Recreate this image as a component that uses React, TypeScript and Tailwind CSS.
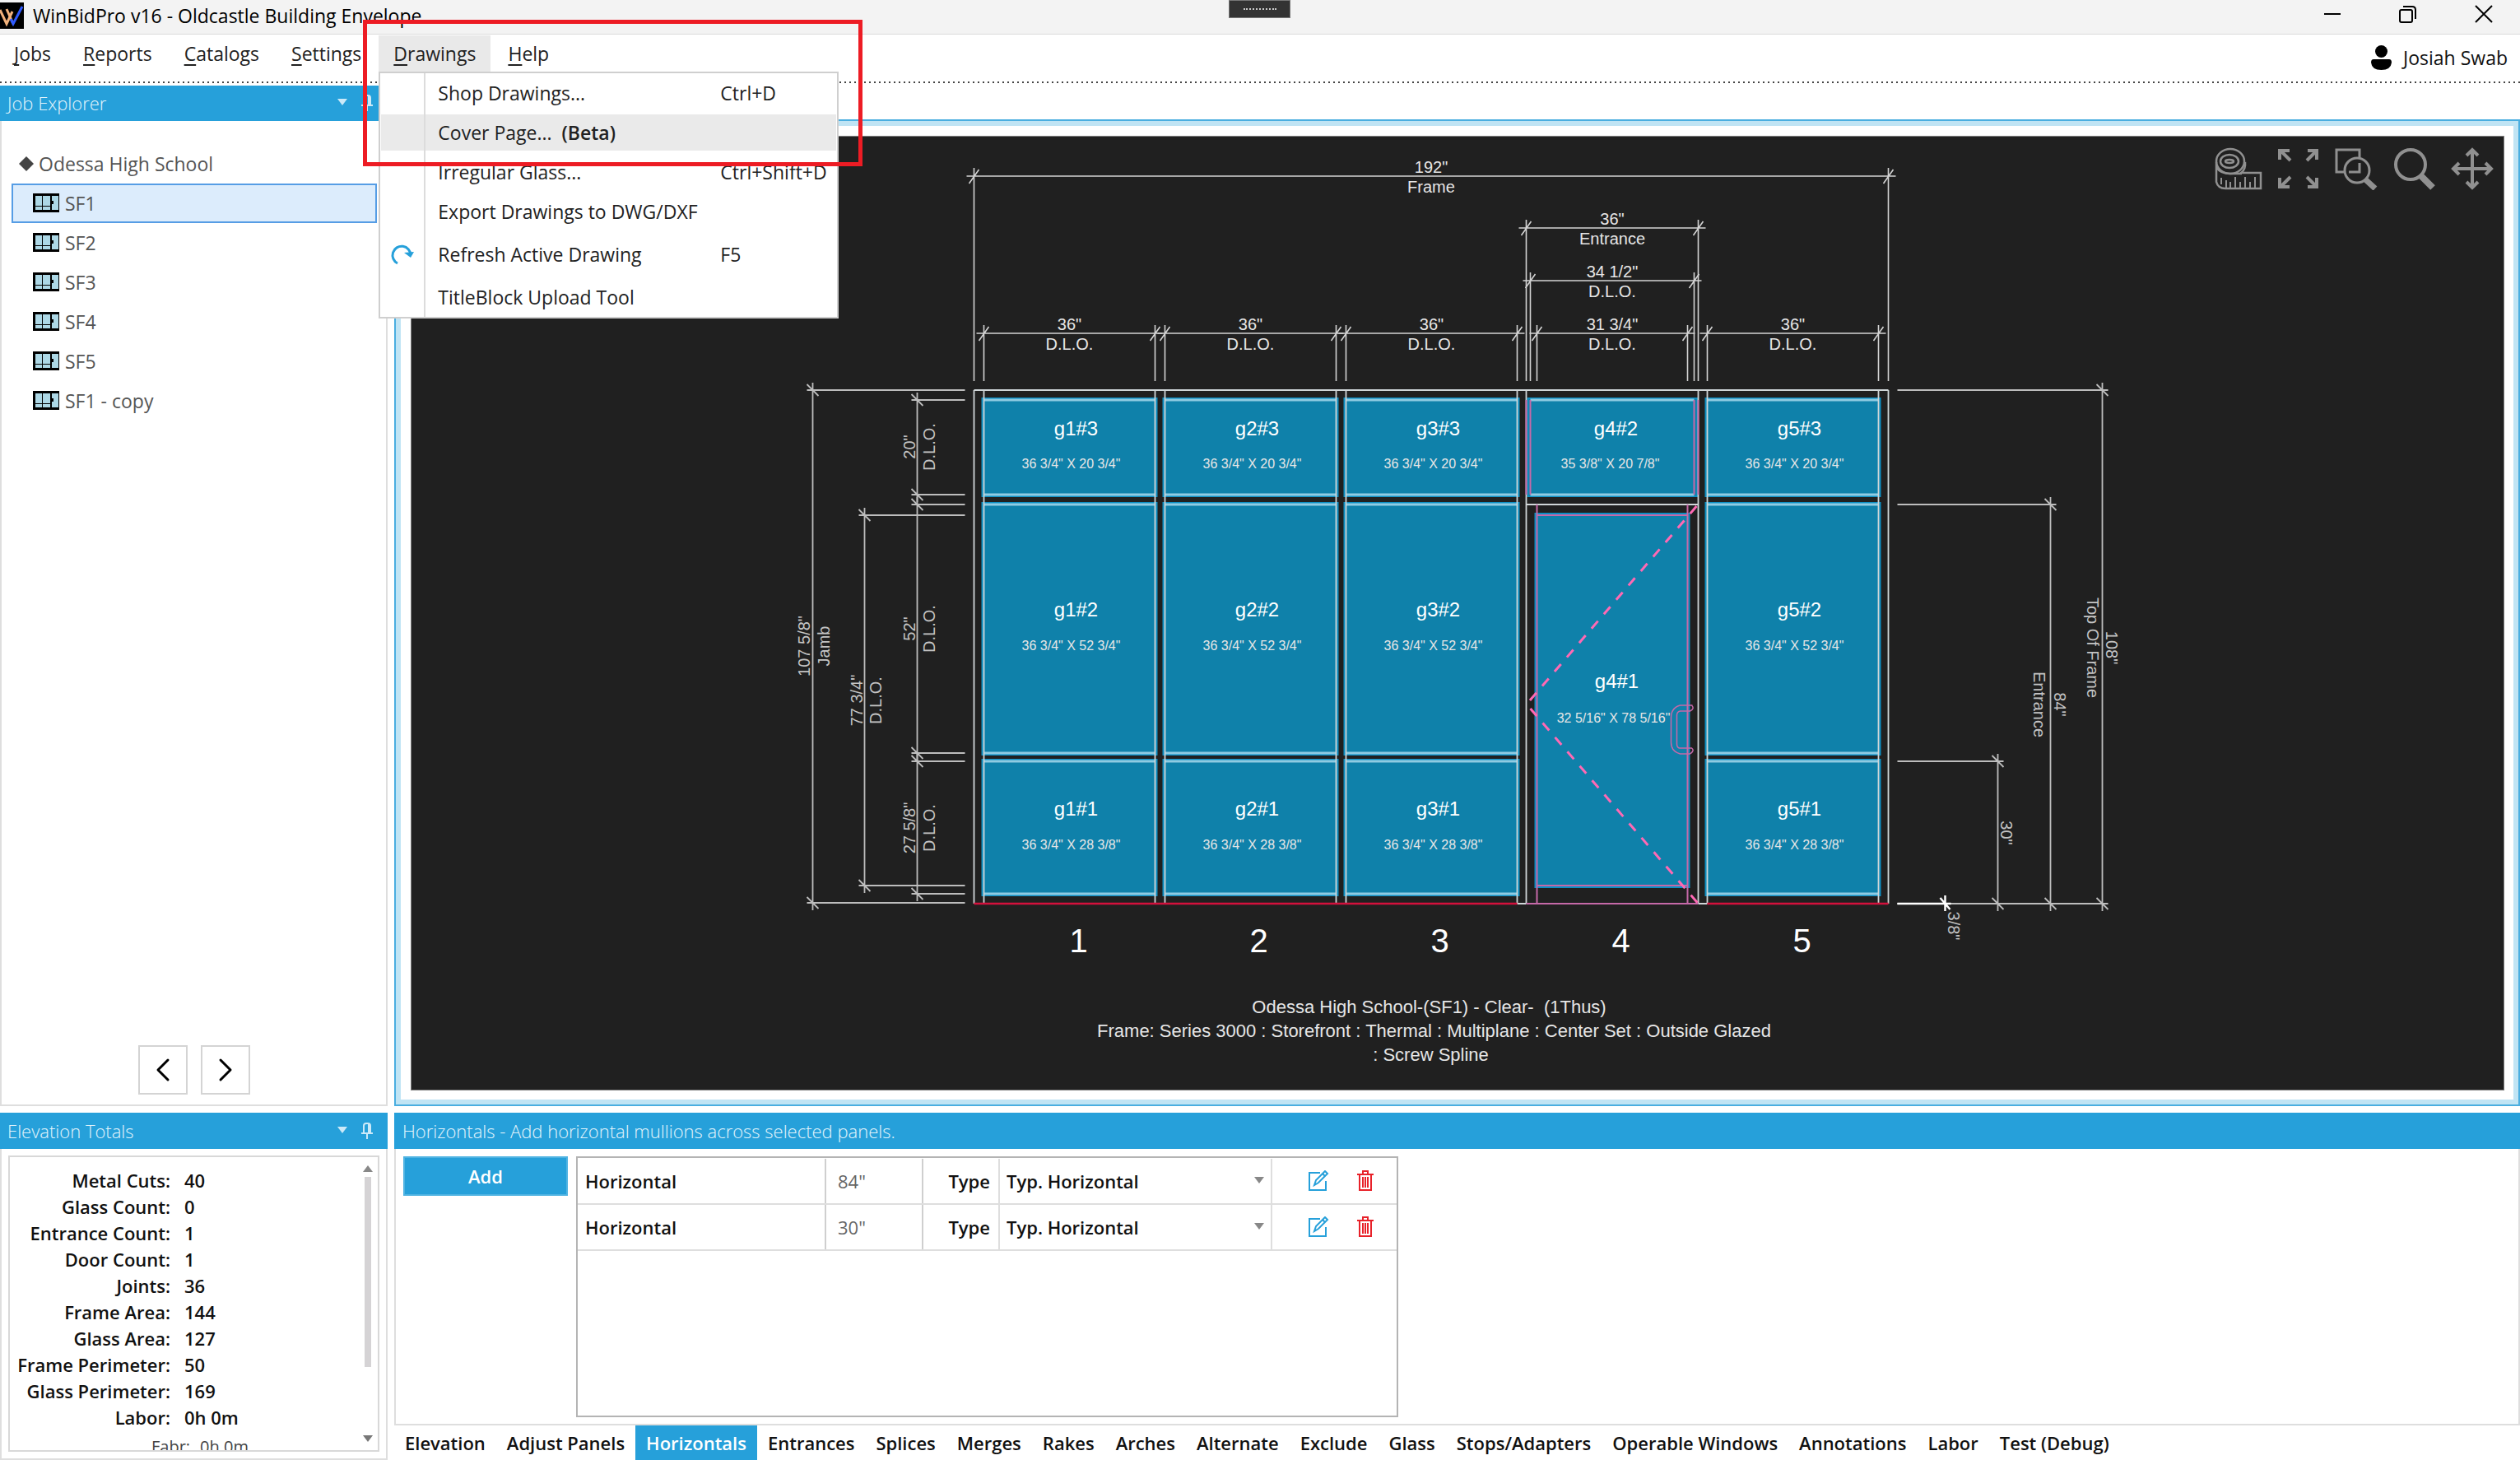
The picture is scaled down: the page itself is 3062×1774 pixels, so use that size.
import { ChevronLeft, ChevronRight } from "lucide-react";

const menuItems = ["Jobs", "Reports", "Catalogs", "Settings", "Drawings", "Help"];
const elevations = ["SF1", "SF2", "SF3", "SF4", "SF5", "SF1 - copy"];
const tabs = [
  "Elevation", "Adjust Panels", "Horizontals", "Entrances", "Splices", "Merges", "Rakes", "Arches",
  "Alternate", "Exclude", "Glass", "Stops/Adapters", "Operable Windows", "Annotations", "Labor", "Test (Debug)",
];
const totals = [
  ["Metal Cuts:", "40"],
  ["Glass Count:", "0"],
  ["Entrance Count:", "1"],
  ["Door Count:", "1"],
  ["Joints:", "36"],
  ["Frame Area:", "144"],
  ["Glass Area:", "127"],
  ["Frame Perimeter:", "50"],
  ["Glass Perimeter:", "169"],
  ["Labor:", "0h 0m"],
];

function Logo() {
  return (
    <svg className="w-[29px] h-8 shrink-0" viewBox="0 0 29 32" fill="none">
      <rect width="29" height="32" fill="#000" />
      <path d="M0 9 L8 26 L15 11" stroke="#f2b27c" strokeWidth="3" />
      <path d="M8 8 L16 26" stroke="#f2b27c" strokeWidth="3" />
      <path d="M13 20 L16 26 L27 5" stroke="#2f5bff" strokeWidth="3" />
    </svg>
  );
}

function ElevationIcon() {
  return (
    <svg className="w-8 h-6 shrink-0" viewBox="0 0 32 24">
      <rect width="32" height="23" fill="#000" />
      <path d="M3 3h8v12h-8zM12 3h9v12h-9zM3 16h8v4h-8zM12 16h9v4h-9zM23 3h8v17h-8z" fill="#add8e6" />
      <rect x="22" y="9" width="3" height="4" fill="#000" />
    </svg>
  );
}

function HeaderIcons() {
  return (
    <div className="flex items-center gap-4 pr-[17px]">
      <button aria-label="Window position">
        <svg className="w-3 h-4 block" viewBox="0 0 12 16"><path d="M0 3h12L6 11z" fill="#cbe9f8" /></svg>
      </button>
      <button aria-label="Auto hide">
        <svg className="w-4 h-5 block" viewBox="0 0 16 20" fill="none" stroke="#cbe9f8" strokeWidth="2">
          <path d="M4 12V4a3 3 0 0 1 3-3h2a3 3 0 0 1 3 3v8M10 2v10M1 13h14M8 13v7" />
        </svg>
      </button>
    </div>
  );
}

function DrawingsMenu() {
  return (
    <div className="absolute top-full left-0 z-20 w-[559px] bg-white border-2 border-[#cfcfcf] flex flex-col text-[#222]">
      <MenuRow label="Shop Drawings..." keys="Ctrl+D" />
      <MenuRow label="Cover Page..." beta active />
      <MenuRow label="Irregular Glass..." keys="Ctrl+Shift+D" />
      <MenuRow label="Export Drawings to DWG/DXF" />
      <MenuRow label="Refresh Active Drawing" keys="F5" tall />
      <MenuRow label="TitleBlock Upload Tool" />
      <div className="absolute inset-y-0 left-[53px] w-[2px] bg-[#dcdcdc]"></div>
    </div>
  );
}

function MenuRow({ label, keys, beta, active, tall }: { label: string; keys?: string; beta?: boolean; active?: boolean; tall?: boolean }) {
  return (
    <button className={tall ? "h-14 px-[1px] flex items-center" : "h-12 px-[1px] flex items-center"}>
      <span className={active ? "h-11 w-full flex items-center text-left bg-[#eaeaea]" : "h-11 w-full flex items-center text-left"}>
        <span className="w-[69px] pl-[9px] shrink-0">
          {tall && (
            <svg className="w-8 h-8 block" viewBox="0 0 32 32" fill="none" stroke="#26a0da" strokeWidth="3">
              <path d="M11 27A11 11 0 1 1 27 17" />
              <path d="M19 14l8 6 4-7z" fill="#26a0da" stroke="none" />
            </svg>
          )}
        </span>
        <span className="w-[343px] shrink-0 whitespace-pre">
          {label}
          {beta && <b className="font-semibold">{"  (Beta)"}</b>}
        </span>
        <span className="whitespace-nowrap">{keys}</span>
      </span>
    </button>
  );
}

/* dimension running left to right */
function DimH({ x1, x2, y, label, name, bottom = 463 }: { x1: number; x2: number; y: number; label: string; name: string; bottom?: number }) {
  const mid = (x1 + x2) / 2;
  return (
    <g>
      <path
        d={`M${x1 - 9} ${y}H${x2 + 9}M${x1} ${y - 10}V${bottom}M${x2} ${y - 10}V${bottom}M${x1 - 6} ${y + 9}L${x1 + 6} ${y - 8}M${x2 - 6} ${y + 9}L${x2 + 6} ${y - 8}`}
        stroke="#d4d4d4" strokeWidth="1.6" fill="none"
      />
      <text x={mid} y={y - 4}>{label}</text>
      <text x={mid} y={y + 20}>{name}</text>
    </g>
  );
}

/* dimension running top to bottom, side is the end of its extension lines */
function DimV({ y1, y2, x, side }: { y1: number; y2: number; x: number; side: number }) {
  const over = side > x ? -7 : 7;
  return (
    <path
      d={`M${x} ${y1 - 9}V${y2 + 9}M${x + over} ${y1}H${side}M${x + over} ${y2}H${side}M${x - 7} ${y1 - 7}L${x + 7} ${y1 + 7}M${x - 7} ${y2 - 7}L${x + 7} ${y2 + 7}`}
      stroke="#bdbdbd" strokeWidth="1.8" fill="none"
    />
  );
}

function Turned({ x, y, angle, children }: { x: number; y: number; angle: number; children: string }) {
  return <text transform={`translate(${x} ${y}) rotate(${angle})`} fill="#c4c4c4">{children}</text>;
}

const columns = [
  { id: 1, x1: 1196, x2: 1404 },
  { id: 2, x1: 1416, x2: 1624 },
  { id: 3, x1: 1636, x2: 1844 },
  { id: 5, x1: 2075, x2: 2283 },
];
const rows = [
  { id: 3, y1: 486, y2: 601, name: 529, size: 569, h: '20 3/4"' },
  { id: 2, y1: 613, y2: 915, name: 749, size: 790, h: '52 3/4"' },
  { id: 1, y1: 925, y2: 1086, name: 991, size: 1032, h: '28 3/8"' },
];

function ElevationDrawing() {
  return (
    <svg
      className="absolute inset-0 w-full h-full font-['Liberation_Sans',Arial,sans-serif]"
      viewBox="501 166 2541 1158"
      fontSize="20"
      fill="#e6e6e6"
      textAnchor="middle"
    >
      <DimH x1={1184} x2={2295} y={214} label={'192"'} name="Frame" />
      <DimH x1={1855} x2={2064} y={277} label={'36"'} name="Entrance" />
      <DimH x1={1860} x2={2059} y={341} label={'34 1/2"'} name="D.L.O." />
      <DimH x1={1868} x2={2051} y={405} label={'31 3/4"'} name="D.L.O." />
      {columns.map((c) => (
        <DimH key={c.id} x1={c.x1} x2={c.x2} y={405} label={'36"'} name="D.L.O." />
      ))}

      <DimV x={988} y1={474} y2={1097} side={1173} />
      <DimV x={1051} y1={626} y2={1076} side={1173} />
      <DimV x={1115} y1={486} y2={601} side={1173} />
      <DimV x={1115} y1={613} y2={915} side={1173} />
      <DimV x={1115} y1={925} y2={1086} side={1173} />
      <DimV x={2555} y1={474} y2={1098} side={2306} />
      <DimV x={2492} y1={613} y2={1098} side={2306} />
      <DimV x={2428} y1={925} y2={1098} side={2306} />
      <path d="M2306 1098H2371M2364 1088V1107M2358 1091L2370 1105" stroke="#fff" strokeWidth="2.5" fill="none" />

      <Turned x={984} y={785} angle={-90}>{'107 5/8"'}</Turned>
      <Turned x={1008} y={785} angle={-90}>Jamb</Turned>
      <Turned x={1048} y={851} angle={-90}>{'77 3/4"'}</Turned>
      <Turned x={1071} y={851} angle={-90}>D.L.O.</Turned>
      <Turned x={1112} y={543} angle={-90}>{'20"'}</Turned>
      <Turned x={1136} y={543} angle={-90}>D.L.O.</Turned>
      <Turned x={1112} y={764} angle={-90}>{'52"'}</Turned>
      <Turned x={1136} y={764} angle={-90}>D.L.O.</Turned>
      <Turned x={1112} y={1006} angle={-90}>{'27 5/8"'}</Turned>
      <Turned x={1136} y={1006} angle={-90}>D.L.O.</Turned>
      <Turned x={2559} y={787} angle={90}>{'108"'}</Turned>
      <Turned x={2536} y={787} angle={90}>Top Of Frame</Turned>
      <Turned x={2496} y={856} angle={90}>{'84"'}</Turned>
      <Turned x={2471} y={856} angle={90}>Entrance</Turned>
      <Turned x={2431} y={1012} angle={90}>{'30"'}</Turned>
      <Turned x={2367} y={1125} angle={90}>{'3/8"'}</Turned>

      {/* glass */}
      {columns.map((c) =>
        rows.map((r) => (
          <g key={`${c.id}-${r.id}`}>
            <rect x={c.x1 - 2} y={r.y1 - 2} width={c.x2 - c.x1 + 4} height={r.y2 - r.y1 + 4} fill="#0f81aa" stroke="#0c8fc4" strokeWidth="2" />
            <path d={`M${c.x1} ${r.y1}H${c.x2}M${c.x1} ${r.y2}H${c.x2}`} stroke="#8fcbe2" strokeWidth="3" />
            <text x={(c.x1 + c.x2) / 2 + 8} y={r.name} fontSize="24" fill="#fff">{`g${c.id}#${r.id}`}</text>
            <text x={(c.x1 + c.x2) / 2 + 2} y={r.size} fontSize="16">{`36 3/4" X ${r.h}`}</text>
          </g>
        ))
      )}
      <rect x="1857" y="484" width="206" height="119" fill="#0f81aa" stroke="#0c8fc4" strokeWidth="2" />
      <path d="M1860 486H2059M1860 601H2059" stroke="#8fcbe2" strokeWidth="3" />
      <rect x="1866" y="624" width="187" height="454" fill="#0f81aa" stroke="#0c8fc4" strokeWidth="2" />

      {/* frame members */}
      <path
        d="M1184 474H2295M1184 474V1098M1196 474V1098M1404 474V1098M1416 474V1098M1624 474V1098M1636 474V1098M1844 474V1098M1855 474V1098M2064 474V1098M2075 474V1098M2283 474V1098M2295 474V1098M1855 613H2064M1844 1098H1855M2064 1098H2075"
        stroke="#d0d6d8" strokeWidth="1.8" fill="none"
      />
      <path d="M1184 1098H1844M2075 1098H2295" stroke="#d3103c" strokeWidth="2.5" />

      {/* door */}
      <g stroke="#c569a8" strokeWidth="2" fill="none">
        <path d="M1855 486V601M1860 486V601M2059 486V601M2064 486V601M1868 613V1098M2051 613V1098M1868 626H2051M1868 1076H2051M1855 1098H2064" />
        <path d="M2057 857H2042Q2031 860 2031 872V902Q2031 913 2042 916H2054Q2060 912 2056 909H2041Q2038 908 2038 904V869Q2038 865 2042 864H2054Q2060 861 2056 857" strokeWidth="1.5" />
      </g>
      <path d="M2062 615L1856 855M1860 861L2064 1098" stroke="#ff69b4" strokeWidth="3" strokeDasharray="12 11" fill="none" />
      <text x="1964" y="529" fontSize="24" fill="#fff">g4#2</text>
      <text x="1957" y="569" fontSize="16">{'35 3/8" X 20 7/8"'}</text>
      <text x="1965" y="836" fontSize="24" fill="#fff">g4#1</text>
      <text x="1961" y="878" fontSize="16">{'32 5/16" X 78 5/16"'}</text>

      <g fontSize="40" fill="#fff">
        <text x="1311" y="1157">1</text>
        <text x="1530" y="1157">2</text>
        <text x="1750" y="1157">3</text>
        <text x="1970" y="1157">4</text>
        <text x="2190" y="1157">5</text>
      </g>
      <g fontSize="22">
        <text x="1737" y="1231" className="whitespace-pre">Odessa High School-(SF1) - Clear-{"  "}(1Thus)</text>
        <text x="1743" y="1260">Frame: Series 3000 : Storefront : Thermal : Multiplane : Center Set : Outside Glazed</text>
        <text x="1739" y="1289">: Screw Spline</text>
      </g>
    </svg>
  );
}

function CanvasTools() {
  return (
    <div className="absolute top-[13px] right-3 flex gap-[18px]">
      <button aria-label="Measure">
        <svg className="w-[60px] h-[52px] block" viewBox="0 0 60 52" fill="none" stroke="#909090" strokeWidth="2.5">
          <ellipse cx="20" cy="17" rx="17" ry="15" />
          <ellipse cx="19" cy="17" rx="11" ry="8" />
          <ellipse cx="19" cy="17" rx="5" ry="2" />
          <path d="M3 18V42Q5 50 14 50H57V31H33Q39 27 38 18M3 24Q8 32 20 32H34" />
          <path d="M9 37V45M15 40V49M20 42V49M26 36V49M32 42V49M38 36V49M44 42V49M50 36V49" strokeWidth="2" />
        </svg>
      </button>
      <button aria-label="Fit to window">
        <svg className="w-[50px] h-[52px] block" viewBox="0 0 50 52" fill="none" stroke="#909090" strokeWidth="4">
          <path d="M2 15V4H14M3 4L15 16M36 4H47V15M47 4L35 16M2 37V48H14M3 48L15 36M36 48H47V37M47 48L35 36" />
        </svg>
      </button>
      <button aria-label="Zoom window">
        <svg className="w-[54px] h-[52px] block" viewBox="0 0 54 52" fill="none" stroke="#909090" strokeWidth="3">
          <path d="M12 30H3V3H31V12M18 30H31V19" />
          <circle cx="28" cy="28" r="15" />
          <path d="M38 39L50 50" strokeWidth="7" />
        </svg>
      </button>
      <button aria-label="Zoom">
        <svg className="w-[52px] h-[52px] block" viewBox="0 0 52 52" fill="none" stroke="#909090" strokeWidth="4">
          <circle cx="21" cy="21" r="18" />
          <path d="M33 34L48 49" strokeWidth="8" />
        </svg>
      </button>
      <button aria-label="Pan">
        <svg className="w-[52px] h-[52px] block" viewBox="0 0 52 52" fill="none" stroke="#909090" strokeWidth="4">
          <path d="M26 3V49M3 26H49M19 10L26 3L33 10M19 42L26 49L33 42M10 19L3 26L10 33M42 19L49 26L42 33" />
        </svg>
      </button>
    </div>
  );
}

function HorizontalRow({ id, size }: { id: string; size: string }) {
  return (
    <tr className="h-14 border-b-2 border-[#dedede]">
      <th scope="row" className="w-[300px] pl-[9px] text-left font-semibold">Horizontal</th>
      <td className="w-[120px] p-0">
        <input aria-label={`Height ${id}`} defaultValue={size} className="block w-full h-[54px] pl-[14px] border-x-2 border-[#cfcfcf] bg-white text-[#666] outline-none" />
      </td>
      <td className="w-[91px] pr-[10px] text-right">
        <label htmlFor={id} className="font-semibold">Type</label>
      </td>
      <td className="w-[333px] p-0">
        <div className="relative">
          <select id={id} className="block w-full h-[54px] pl-2 appearance-none border-x-2 border-[#dedede] bg-white font-semibold outline-none">
            <option>Typ. Horizontal</option>
          </select>
          <svg className="absolute right-[10px] top-5 w-3 h-3 pointer-events-none" viewBox="0 0 12 12"><path d="M0 2h12L6 10z" fill="#888" /></svg>
        </div>
      </td>
      <td className="p-0">
        <div className="flex items-center gap-[34px] pl-[43px]">
          <button aria-label="Edit">
            <svg className="w-[26px] h-[26px] block" viewBox="0 0 26 26" fill="none" stroke="#26a0da" strokeWidth="2">
              <path d="M15 3H2V24H22V13" />
              <path d="M8 18L10 12L21 1L24 4L13 15Z" />
              <path d="M18 4L21 7" />
            </svg>
          </button>
          <button aria-label="Delete">
            <svg className="w-5 h-[26px] block" viewBox="0 0 20 26" fill="none" stroke="#e8222a" strokeWidth="2">
              <path d="M0 5H20M7 4V1H13V4M3 6V24H17V6M7 8V21M10 8V21M13 8V21" />
            </svg>
          </button>
        </div>
      </td>
    </tr>
  );
}

export default function App() {
  return (
    <div className="relative flex flex-col w-full h-screen overflow-hidden bg-white text-[23px] leading-8 text-[#111] font-['Open_Sans','Noto_Sans',sans-serif]">
      {/* Title bar */}
      <header className="relative h-[42px] shrink-0 flex items-center justify-between bg-[#f3f3f3] border-b border-[#dadada]">
        <div className="flex items-center gap-[11px] pb-[3px] text-black">
          <Logo />
          <span>WinBidPro v16 - Oldcastle Building Envelope</span>
        </div>
        <div className="absolute top-0 left-[1493px] w-[75px] h-[22px] bg-[#333] border border-[#777] flex items-center justify-center">
          <span className="w-10 border-t-2 border-dotted border-[#ccc]"></span>
        </div>
        <div className="flex items-center gap-[70px] pr-[33px] pb-2">
          <button aria-label="Minimize"><svg className="w-[22px] h-[22px] block" viewBox="0 0 22 22"><path d="M1 11H21" stroke="#000" strokeWidth="2" /></svg></button>
          <button aria-label="Restore">
            <svg className="w-[22px] h-[22px] block" viewBox="0 0 22 22" fill="none" stroke="#000" strokeWidth="2">
              <rect x="1" y="6" width="15" height="15" rx="2" />
              <path d="M5 2H16Q20 2 20 6V17" />
            </svg>
          </button>
          <button aria-label="Close"><svg className="w-[22px] h-[22px] block" viewBox="0 0 22 22"><path d="M1 1L21 21M21 1L1 21" stroke="#000" strokeWidth="2" /></svg></button>
        </div>
      </header>

      {/* Menu bar */}
      <nav className="h-[62px] shrink-0 flex justify-between items-start">
        <div className="flex gap-[3px] -ml-px pt-px text-[#222]">
          {menuItems.map((m) => (
            <div key={m} className="relative">
              <button className={m === "Drawings" ? "h-[44px] px-[18px] bg-[#e9e9e9]" : "h-[44px] px-[18px]"}>
                <span className="underline underline-offset-4">{m[0]}</span>{m.slice(1)}
              </button>
              {m === "Drawings" && <DrawingsMenu />}
            </div>
          ))}
        </div>
        <div className="flex items-center gap-[14px] pt-3 pr-[15px]">
          <svg className="w-[25px] h-[30px]" viewBox="0 0 25 30">
            <circle cx="12.500" cy="7.500" r="7.500" />
            <path d="M3 17H22Q25 17 25 21Q24 30 12.500 30Q1 30 0 21Q0 17 3 17Z" />
          </svg>
          <span>Josiah Swab</span>
        </div>
      </nav>
      <div className="absolute top-[99px] inset-x-0 h-[2px] bg-[repeating-linear-gradient(90deg,#444_0_2px,transparent_2px_6px)]"></div>

      <div className="flex-1 min-h-0 flex gap-2">
        {/* Job explorer */}
        <aside className="w-[471px] shrink-0 flex flex-col">
          <div className="h-[43px] shrink-0 pl-[9px] pb-px flex items-center justify-between bg-[#26a0da] text-[22px] text-[#e3f4fc]">
            <h2 className="font-light">Job Explorer</h2>
            <HeaderIcons />
          </div>
          <div className="flex-1 flex flex-col border-2 border-t-0 border-[#dedede] px-3 pt-7 pb-3 text-[#555]">
            <div className="h-12 flex items-center gap-[6px] pl-[9px]">
              <svg className="w-[18px] h-[18px]" viewBox="0 0 18 18"><path d="M9 0L18 9L9 18L0 9Z" fill="#444" /></svg>
              Odessa High School
            </div>
            {elevations.map((e, i) => (
              <button
                key={e}
                className={
                  i === 0
                    ? "w-[444px] h-12 pl-6 flex items-center gap-[7px] border-2 border-[#569de5] bg-[#dcecfc]"
                    : "w-[444px] h-12 pl-6 flex items-center gap-[7px] border-2 border-transparent"
                }
              >
                <ElevationIcon />
                {e}
              </button>
            ))}
            <div className="mt-auto flex justify-center gap-4">
              <button aria-label="Previous" className="w-[60px] h-[60px] flex items-center justify-center border-2 border-[#d4d4d4] text-black">
                <ChevronLeft size={48} strokeWidth={1.5} />
              </button>
              <button aria-label="Next" className="w-[60px] h-[60px] flex items-center justify-center border-2 border-[#d4d4d4] text-black">
                <ChevronRight size={48} strokeWidth={1.5} />
              </button>
            </div>
          </div>
        </aside>

        {/* Drawing area */}
        <main className="flex-1 mt-[41px] flex border-2 border-[#4aaee0]">
          <div className="flex-1 flex border-[6px] border-[#c0e4f4] pl-3 pt-3 pr-[11px] pb-[11px]">
            <div className="relative flex-1 bg-[#202020] border border-[#808080]">
              <ElevationDrawing />
              <CanvasTools />
            </div>
          </div>
        </main>
      </div>

      <div className="h-[430px] shrink-0 pt-2 flex gap-2 text-[22px]">
        {/* Elevation totals */}
        <aside className="w-[471px] shrink-0 flex flex-col">
          <div className="h-11 shrink-0 pl-[9px] flex items-center justify-between bg-[#26a0da] text-[#e3f4fc]">
            <h2 className="font-light">Elevation Totals</h2>
            <HeaderIcons />
          </div>
          <div className="flex-1 min-h-0 p-2 border-2 border-t-0 border-[#dedede] flex">
            <div className="flex-1 min-h-0 overflow-hidden border-2 border-[#d8d8d8] flex justify-between">
              <div className="pt-3">
                <table className="font-semibold">
                  <tbody>
                    {totals.map(([name, value]) => (
                      <tr key={name} className="h-8">
                        <th scope="row" className="w-[195px] p-0 text-right font-semibold">{name}</th>
                        <td className="p-0 pl-[17px]">{value}</td>
                      </tr>
                    ))}
                  </tbody>
                </table>
                <p className="pl-[172px] pt-[6px] flex gap-3 text-xl text-[#444]"><span>Fabr:</span><span>0h 0m</span></p>
              </div>
              <div className="w-4 mr-1 py-2 flex flex-col items-center gap-1">
                <svg className="w-3 h-3" viewBox="0 0 12 12"><path d="M0 10h12L6 2z" fill="#888" /></svg>
                <div className="w-2 h-[231px] bg-[#d5d3d5]"></div>
                <svg className="mt-auto w-3 h-3" viewBox="0 0 12 12"><path d="M0 2h12L6 10z" fill="#777" /></svg>
              </div>
            </div>
          </div>
        </aside>

        {/* Horizontals */}
        <section className="flex-1 min-w-0 flex flex-col">
          <div className="h-11 shrink-0 pl-[10px] flex items-center bg-[#26a0da] text-[#e3f4fc]">
            <h2 className="font-light">Horizontals - Add horizontal mullions across selected panels.</h2>
          </div>
          <div className="flex-1 flex items-start gap-[10px] pl-[9px] pt-[9px] pb-2 border-2 border-t-0 border-[#dedede]">
            <button className="w-[200px] h-12 bg-[#26a0da] border-2 border-[#4fb3e2] text-white font-semibold">Add</button>
            <div className="w-[999px] h-full border-2 border-[#b4b4b4]">
              <table className="w-full table-fixed border-collapse">
                <tbody>
                  <HorizontalRow id="type-1" size={'84"'} />
                  <HorizontalRow id="type-2" size={'30"'} />
                </tbody>
              </table>
            </div>
          </div>
          <div role="tablist" className="h-[42px] shrink-0 flex">
            {tabs.map((t) => (
              <button
                key={t}
                role="tab"
                aria-selected={t === "Horizontals"}
                className={t === "Horizontals" ? "px-[13px] font-semibold bg-[#26a0da] text-white" : "px-[13px] font-semibold"}
              >
                {t}
              </button>
            ))}
          </div>
        </section>
      </div>

      {/* Highlight box */}
      <div className="absolute left-[441px] top-[24px] z-30 w-[607px] h-[178px] border-[5px] border-[#ed1c24] pointer-events-none"></div>
    </div>
  );
}
